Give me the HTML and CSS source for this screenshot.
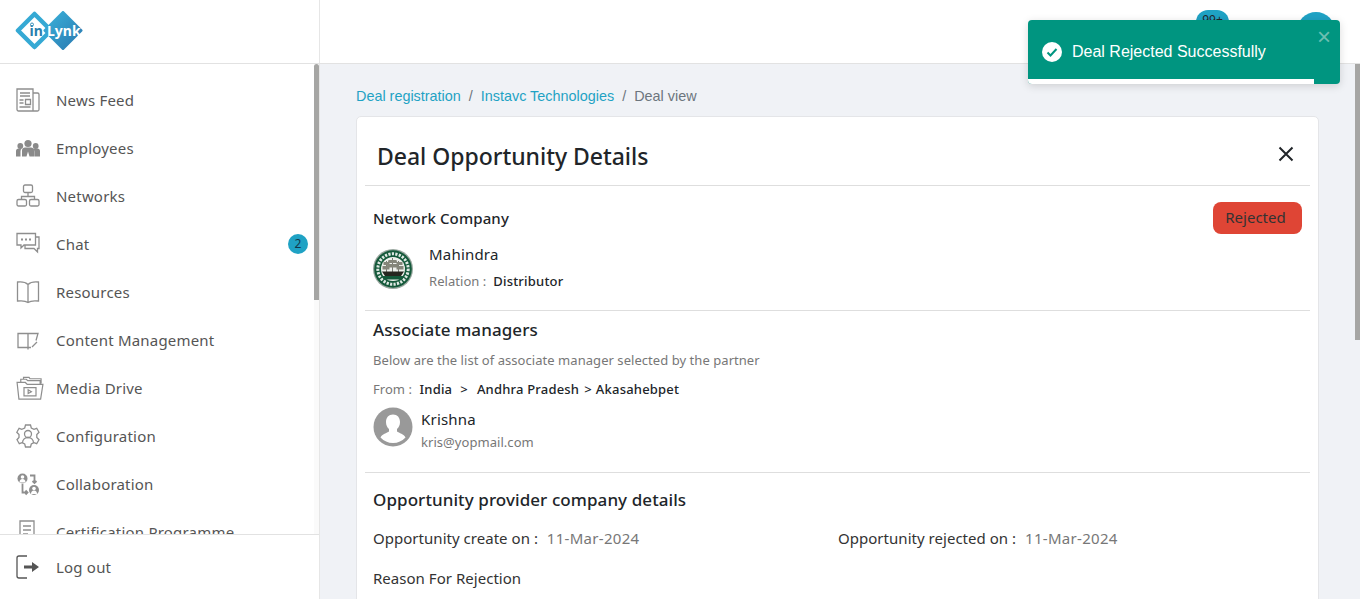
FILE: index.html
```html
<!DOCTYPE html>
<html lang="en">
<head>
<meta charset="utf-8">
<title>Deal Opportunity Details</title>
<link rel="stylesheet" href="styles.css">
</head>
<body>
<div class="app">
  <header class="topbar">
    <div class="brand">
      <svg class="logo" width="68" height="40" viewBox="0 0 68 40">
        <defs>
          <linearGradient id="lg" x1="0" y1="0" x2="1" y2="1"><stop offset="0" stop-color="#3ab2da"/><stop offset="1" stop-color="#2a78b0"/></linearGradient>
        </defs>
        <path d="M19.500 3 L36 19.500 L19.500 36 L3 19.500 Z" fill="#fff" stroke="#35a9d4" stroke-width="4.500" stroke-linejoin="round"/>
        <path d="M48 1.500 L66 19.500 L48 37.500 L30 19.500 Z" fill="url(#lg)" stroke="url(#lg)" stroke-linejoin="round" stroke-width="3"/>
        <text x="14.500" y="24.500" class="logo-in">in</text>
        <text x="32" y="24.500" class="logo-lynk">Lynk</text>
        <circle cx="17" cy="13.500" r="1.500" fill="none" stroke="#3a8fb8"/>
      </svg>
    </div>
    <div class="top-actions">
      <span class="count-badge">99+</span>
      <span class="user-dot"></span>
    </div>
  </header>
  <div class="body-row">
    <aside class="sidebar">
      <nav class="menu">
        <a class="menu-item"><svg class="ico" viewBox="0 0 24 24"><path d="M1 1h16v22H2.500A1.500 1.500 0 0 1 1 21.500z M17 5h4.500a1.500 1.500 0 0 1 1.500 1.500v15a1.500 1.500 0 0 1-1.500 1.500H17 M4 5h10 M4 8h10 M3.500 12h4 M3.500 15h4 M3.500 19h11 M9.500 11.500h5v5h-5z"/></svg><span>News Feed</span></a>
        <a class="menu-item"><svg class="ico solid" viewBox="0 -2.500 24 24"><circle cx="12" cy="5" r="3.600"/><circle cx="4.300" cy="7.500" r="2.900"/><circle cx="19.700" cy="7.500" r="2.900"/><path d="M0 18v-5.500c0-1.500 1.200-2.500 2.500-2.500h3.200c-.8.800-1.200 1.800-1.200 3v5z M18.300 18v-5c0-1.200-.4-2.200-1.200-3h4.400c1.300 0 2.500 1 2.500 2.500V18z M6 18v-6c0-1.800 1.500-3 3-3h6c1.500 0 3 1.200 3 3v6h-4.500l-1.500-5-1.500 5z"/></svg><span>Employees</span></a>
        <a class="menu-item"><svg class="ico" viewBox="0 0 24 24"><rect x="7.500" y="1" width="9" height="7.500" rx="1.500"/><rect x="1" y="15.500" width="9.500" height="6.500" rx="1.500"/><rect x="13.500" y="15.500" width="9.500" height="6.500" rx="1.500"/><path d="M12 8.500v4 M5.500 15.500v-3h13v3"/></svg><span>Networks</span></a>
        <a class="menu-item"><svg class="ico" viewBox="0 0 24 24"><path d="M1 1.500h18.500V13H8l-3 3v-3H1z M19.500 5H23v11.500h-1.500V20l-3.500-3.500H9V13"/><path class="dots" d="M5 7.500h2 M9 7.500h2 M13 7.500h2"/></svg><span>Chat</span><em class="menu-badge">2</em></a>
        <a class="menu-item"><svg class="ico" viewBox="0 0 24 24"><path d="M12 4.500C10 2.500 6 1.500 1.500 2v19c4.500-.5 8.500 0 10.500 1.500 2-1.500 6-2 10.500-1.500V2C18 1.500 14 2.500 12 4.500z M12 4.500v18"/></svg><span>Resources</span></a>
        <a class="menu-item"><svg class="ico" viewBox="0 0 24 24"><path d="M12 5.500H2v14h10 M12 5.500v16 M12 5.500h10l-2 7 M12 19.500h3 M16 19l5-5"/></svg><span>Content Management</span></a>
        <a class="menu-item"><svg class="ico wide" viewBox="0 0 30 26"><path d="M1 7h9l2 2h17l-2.500 16H3z M5 7V3.500h6l1.500 1.500H26v4 M8 3V1.500h6l1 1.500h12v5 M8.500 12.500h13v9h-13z"/><path d="M13 15v4l3.500-2z"/></svg><span>Media Drive</span></a>
        <a class="menu-item"><svg class="ico" viewBox="0 0 24 24"><path d="M9.500 1h5l.8 3 2.700 1.300 2.700-1 2.300 4-2.200 2.200v3l2.200 2.200-2.300 4-2.700-1-2.700 1.300-.8 3h-5l-.8-3-2.700-1.300-2.700 1-2.300-4L3 13.500v-3L.8 8.300l2.300-4 2.700 1L8.700 4z"/><circle cx="12" cy="10" r="3.500"/><path d="M6.500 19c0-3.500 2.500-5.500 5.500-5.500s5.500 2 5.500 5.500"/></svg><span>Configuration</span></a>
        <a class="menu-item"><svg class="ico" viewBox="0 0 24 24"><circle cx="6.500" cy="6.500" r="5" class="fill"/><circle cx="18" cy="18" r="5" class="fill"/><circle cx="6.500" cy="5" r="1.800" class="hole"/><path class="hole" d="M3.500 10.500c0-2 1-3.500 3-3.500s3 1.500 3 3.500z"/><circle cx="18" cy="16.500" r="1.800" class="hole"/><path class="hole" d="M15 22c0-2 1-3.500 3-3.500s3 1.500 3 3.500z"/><path d="M6.500 12v8.500h5 M9.500 18.500l2 2-2 2 M14 3.500h4.500V11 M16.500 9l2 2 2-2" stroke-width="1.800"/></svg><span>Collaboration</span></a>
        <a class="menu-item"><svg class="ico" viewBox="0 0 24 24"><path d="M15 22H4V1h14v13 M7 6h8 M7 10h8 M7 14h5"/><circle cx="18" cy="19" r="4"/></svg><span>Certification Programme</span></a>
      </nav>
      <span class="side-track"></span>
      <span class="side-thumb"></span>
      <a class="logout"><svg class="ico dark" viewBox="0 0 24 24"><path d="M11 1H3a2 2 0 0 0-2 2v18a2 2 0 0 0 2 2h8"/><path class="fill" d="M8 10.500h8V7l7 5-7 5v-3.500H8z"/></svg><span>Log out</span></a>
    </aside>
    <main class="main">
      <ol class="crumbs">
        <li><a>Deal registration</a></li>
        <li class="sep">/</li>
        <li><a>Instavc Technologies</a></li>
        <li class="sep">/</li>
        <li class="now">Deal view</li>
      </ol>
      <section class="card">
        <div class="card-head">
          <h1>Deal Opportunity Details</h1>
          <svg class="close" width="16" height="16" viewBox="0 0 16 16"><path d="M1.500 1.500l13 13M14.500 1.500l-13 13"/></svg>
        </div>
        <div class="block block-company">
          <div class="row-between">
            <h2 class="label">Network Company</h2>
            <span class="status">Rejected</span>
          </div>
          <div class="company">
            <svg class="seal" width="40" height="40" viewBox="0 0 40 40">
              <circle cx="20" cy="20" r="20" fill="#9aa8a0"/>
              <circle cx="20" cy="20" r="18.800" fill="#14593a"/>
              <circle cx="20" cy="20" r="15.200" fill="none" stroke="#dfe9e3" stroke-width="3" stroke-dasharray="2.200 1.300"/>
              <circle cx="20" cy="20" r="12" fill="#eef1ec"/>
              <path d="M19.500 9v15 M13.500 12v12 M25.500 12v12" stroke="#45463e" stroke-width=".7"/>
              <path d="M15.500 11h8l.8 3h-9.600z M14.500 15h10.500l1 3.500H13.500z M10.500 13h6v3h-6z M9.500 17h7v3.500h-7z M23.500 13h6v3h-6z M23.500 17h7v3.500h-7z" fill="#85867a"/>
              <path d="M9 22.500h22l-3 4.500H12z" fill="#26261f"/>
              <path d="M8.500 27h23l-2.500 3.500H11z" fill="#14593a"/>
            </svg>
            <div class="company-text">
              <div class="name">Mahindra</div>
              <div class="meta">Relation :&nbsp; <b>Distributor</b></div>
            </div>
          </div>
        </div>
        <div class="block block-managers">
          <h2 class="heading">Associate managers</h2>
          <p class="hint">Below are the list of associate manager selected by the partner</p>
          <p class="meta from">From :&nbsp;<b class="place">India</b><b class="gt">&gt;</b><b>Andhra Pradesh</b><b class="gt tight">&gt;</b><b>Akasahebpet</b></p>
          <div class="person">
            <svg class="face" width="40" height="40" viewBox="0 0 40 40">
              <circle cx="20" cy="20" r="19.500" fill="#999"/>
              <path d="M20 7.500c4.300 0 7 3 7 7.500 0 3-1.200 5.500-3 7v2.500c2 1.500 7 2.500 8.500 6A17 17 0 0 1 20 36a17 17 0 0 1-12.500-5.500c1.500-3.500 6.500-4.500 8.500-6V22c-1.800-1.500-3-4-3-7 0-4.500 2.700-7.500 7-7.500z" fill="#fff"/>
            </svg>
            <div class="person-text">
              <div class="name">Krishna</div>
              <div class="mail">kris@yopmail.com</div>
            </div>
          </div>
        </div>
        <div class="block block-provider">
          <h2 class="heading">Opportunity provider company details</h2>
          <div class="dates">
            <div class="date-item">Opportunity create on :&nbsp; <span>11-Mar-2024</span></div>
            <div class="date-item">Opportunity rejected on :&nbsp; <span>11-Mar-2024</span></div>
          </div>
          <div class="date-item reason">Reason For Rejection</div>
        </div>
      </section>
    </main>
    <span class="main-thumb"></span>
  </div>
  <div class="toast">
    <svg class="toast-check" width="20" height="20" viewBox="0 0 20 20"><circle cx="10" cy="10" r="10" fill="#fff"/><path d="M5.500 10.500l3 3 6-6.500" fill="none" stroke="#009580" stroke-width="2"/></svg>
    <span class="toast-text">Deal Rejected Successfully</span>
    <span class="toast-close">×</span>
    <span class="toast-progress"></span>
  </div>
</div>
</body>
</html>
```
FILE: styles.css
```css
* { box-sizing: border-box; }
html, body { margin: 0; height: 100%; overflow: hidden; }
body { font-family: "Noto Sans", sans-serif; color: #212529; background: #f0f2f6; }
.app { height: 100vh; display: flex; flex-direction: column; position: relative; }

.topbar { height: 64px; flex: none; display: flex; background: #fff; border-bottom: 1px solid #e2e2e2; }
.brand { width: 320px; flex: none; border-right: 1px solid #e6e6e6; padding: 11px 0 0 15px; }
.logo { display: block; }
.logo-in { font: 700 14px "Noto Sans", sans-serif; fill: #2a7fae; }
.logo-lynk { font: 700 14px "Noto Sans", sans-serif; fill: #fff; }
.top-actions { flex: 1; position: relative; }
.count-badge { position: absolute; left: 876px; top: 10px; width: 33px; height: 24px; border-radius: 12px; background: #1fa2c4; font-size: 12px; text-align: center; line-height: 20px; color: #212529; }
.user-dot { position: absolute; left: 977px; top: 12px; width: 38px; height: 38px; border-radius: 50%; background: #1fa2c4; }

.body-row { flex: 1; min-height: 0; display: flex; position: relative; }
.sidebar { width: 320px; flex: none; display: flex; flex-direction: column; background: #fff; border-right: 1px solid #e6e6e6; position: relative; }
.menu { flex: 1; min-height: 0; overflow: hidden; padding-top: 12px; }
.side-track { position: absolute; right: 0; top: 0; width: 5px; height: 470px; background: #fafafa; }
.side-thumb { position: absolute; right: 0; top: 0; width: 5px; height: 236px; background: #a6a6a4; border-radius: 3px 3px 0 0; }
.menu-item, .logout { display: flex; align-items: center; height: 48px; padding-left: 16px; font-size: 15px; letter-spacing: .2px; color: #555; white-space: nowrap; }
.menu-item > span, .logout > span { margin-left: 16px; }
.menu-badge { margin-left: auto; margin-right: 11px; width: 20px; height: 20px; border-radius: 50%; background: #1fa2c4; color: #14384a; font: 12px/20px "Noto Sans", sans-serif; text-align: center; }
.ico { width: 24px; height: 24px; flex: none; fill: none; stroke: #8e8e8e; stroke-width: 1.300; }
.ico.solid { fill: #8a8a8a; stroke: none; }
.ico.wide { width: 28px; margin-right: -4px; }
.ico .fill { fill: #8e8e8e; stroke: none; }
.ico .hole { fill: #fff; stroke: none; }
.ico .dots { stroke-width: 2; }
.ico.dark { stroke: #555; }
.ico.dark .fill { fill: #555; }
.logout { flex: none; height: 65px; border-top: 1px solid #e2e2e2; }

.main { flex: 1; min-width: 0; overflow: hidden; padding: 0 41px 0 36px; }
.main-thumb { position: absolute; right: 0; top: 0; width: 5px; height: 276px; background: #a6a6a4; }

.crumbs { list-style: none; display: flex; gap: 8px; margin: 0; padding: 24px 0 12px; font: 14.4px/16px "Liberation Sans", sans-serif; }
.crumbs a { color: #1fa2c4; }
.crumbs .sep, .crumbs .now { color: #6c757d; }

.card { background: #fff; border: 1px solid #e4e5e8; border-radius: 5px; padding: 0 8px; min-height: 921px; }
.card-head { height: 69px; display: flex; align-items: center; justify-content: space-between; padding: 9px 16px 0 12px; border-bottom: 1px solid #dedede; }
h1 { margin: 0; font-size: 23px; letter-spacing: -.03px; font-weight: 500; color: #212529; }
.close { fill: none; stroke: #212529; stroke-width: 2; margin-top: -4px; }
.block { padding: 0 8px; border-bottom: 1px solid #dedede; }
.block-company { height: 125px; padding-top: 16px; }
.block-managers { height: 162px; padding-top: 7px; }
.block-provider { border-bottom: 0; padding-top: 15px; }
.row-between { display: flex; justify-content: space-between; align-items: center; height: 32px; }
.label { margin: 0; font-size: 15px; letter-spacing: .13px; font-weight: 500; color: #212529; }
.status { width: 89px; height: 32px; padding-right: 4px; border-radius: 8px; background: #df4535; color: #333; font-size: 15px; line-height: 31px; text-align: center; }
.company { display: flex; margin-top: 3px; }
.seal { margin-top: 12px; flex: none; }
.company-text { margin-left: 16px; }
.name { font-size: 15px; letter-spacing: .2px; line-height: 20px; color: #212529; }
.company-text .name { margin-top: 7px; }
.meta { font-size: 13px; line-height: 20px; letter-spacing: .05px; color: #777; margin-top: 7px; }
.meta b { font-weight: 500; letter-spacing: .2px; color: #212529; }
.meta .place { margin-left: 4px; }
.meta .gt { margin: 0 9px 0 8px; }
.meta .gt.tight { margin: 0 4px 0 5px; }
.heading { margin: 0; font-size: 17px; letter-spacing: .08px; line-height: 24px; font-weight: 500; color: #212529; }
.hint { margin: 8px 0 0; font-size: 13px; letter-spacing: .05px; line-height: 20px; color: #777; }
.from { margin: 9px 0 0; }
.person { display: flex; margin-top: 8px; }
.person-text { margin-left: 8px; }
.face { flex: none; }
.mail { font-size: 13px; letter-spacing: .05px; line-height: 20px; color: #777; margin-top: 2px; }
.person-text .name { line-height: 22px; margin-top: 1px; }
.dates { display: grid; grid-template-columns: 465px 1fr; margin-top: 15px; }
.date-item { font-size: 15px; letter-spacing: .03px; line-height: 22px; color: #333; }
.date-item span { color: #777; letter-spacing: .3px; margin-left: 1px; }
.reason { margin-top: 18px; }

.toast { position: absolute; left: 1028px; top: 20px; width: 312px; height: 64px; background: #009580; border-radius: 4px; box-shadow: 0 2px 8px rgba(0,0,0,.15); display: flex; align-items: center; padding: 0 0 1px 14px; color: #fff; overflow: hidden; }
.toast-text { margin-left: 10px; font: 16px/20px "Liberation Sans", sans-serif; }
.toast-close { position: absolute; right: 9px; top: 7px; font: 24px/20px "Liberation Sans", sans-serif; color: #6dbfb2; }
.toast-progress { position: absolute; left: 0; bottom: 0; width: 286px; height: 5px; background: #fff; }
```
